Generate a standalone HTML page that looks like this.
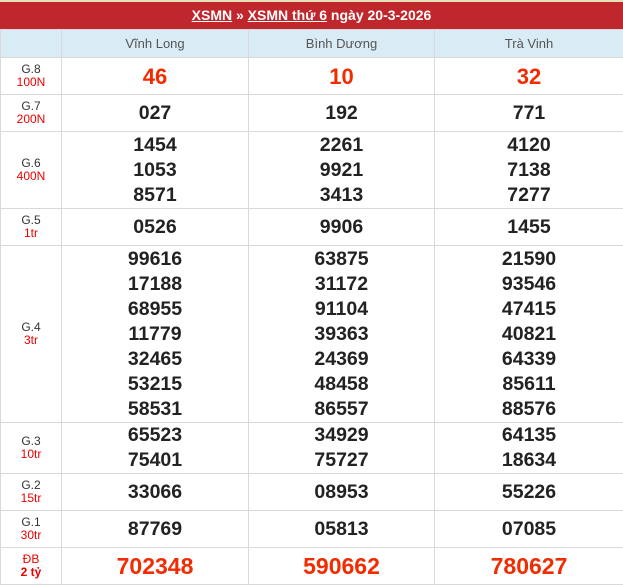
<!DOCTYPE html>
<html><head><meta charset="utf-8"><style>
*{margin:0;padding:0;box-sizing:border-box}
body{width:623px;height:577px;overflow:hidden;background:#fff;font-family:"Liberation Sans",Arial,sans-serif}
.top{height:2px;background:#e9dfb8}
.hd{height:27px;background:#c0272d;color:#fff;text-align:center;font-weight:bold;font-size:14px;line-height:27px}
.hd u{text-decoration:underline}
table{border-collapse:collapse;width:623px;table-layout:fixed}
td{border:1px solid #d9d9d9;text-align:center;vertical-align:middle;color:#222;font-weight:bold;font-size:19.5px;line-height:25px}
td.l{font-weight:normal;font-size:12px;line-height:13px;color:#333}
td.l span{color:#e00}
tr.h td{background:#d9ebf4;font-weight:normal;font-size:13px;color:#555;height:28px}
.r{color:#f32b00;font-size:22px}
.db{color:#f32b00;font-size:23px}
</style></head><body>
<div class="top"></div>
<div class="hd"><u>XSMN</u> » <u>XSMN thứ 6</u> ngày 20-3-2026</div>
<table>
<colgroup><col style="width:61px"><col style="width:187px"><col style="width:186px"><col style="width:189px"></colgroup>
<tr class="h"><td></td><td>Vĩnh Long</td><td>Bình Dương</td><td>Trà Vinh</td></tr>
<tr style="height:37px"><td class="l">G.8<br><span>100N</span></td><td class="r">46</td><td class="r">10</td><td class="r">32</td></tr>
<tr style="height:37px"><td class="l">G.7<br><span>200N</span></td><td>027</td><td>192</td><td>771</td></tr>
<tr style="height:77px"><td class="l">G.6<br><span>400N</span></td><td>1454<br>1053<br>8571</td><td>2261<br>9921<br>3413</td><td>4120<br>7138<br>7277</td></tr>
<tr style="height:37px"><td class="l">G.5<br><span>1tr</span></td><td>0526</td><td>9906</td><td>1455</td></tr>
<tr style="height:177px"><td class="l">G.4<br><span>3tr</span></td><td>99616<br>17188<br>68955<br>11779<br>32465<br>53215<br>58531</td><td>63875<br>31172<br>91104<br>39363<br>24369<br>48458<br>86557</td><td>21590<br>93546<br>47415<br>40821<br>64339<br>85611<br>88576</td></tr>
<tr style="height:51px"><td class="l">G.3<br><span>10tr</span></td><td>65523<br>75401</td><td>34929<br>75727</td><td>64135<br>18634</td></tr>
<tr style="height:37px"><td class="l">G.2<br><span>15tr</span></td><td>33066</td><td>08953</td><td>55226</td></tr>
<tr style="height:37px"><td class="l">G.1<br><span>30tr</span></td><td>87769</td><td>05813</td><td>07085</td></tr>
<tr style="height:37px"><td class="l" style="color:#e00">ĐB<br><b style="color:#e00">2 tỷ</b></td><td class="db">702348</td><td class="db">590662</td><td class="db">780627</td></tr>
</table>
</body></html>
